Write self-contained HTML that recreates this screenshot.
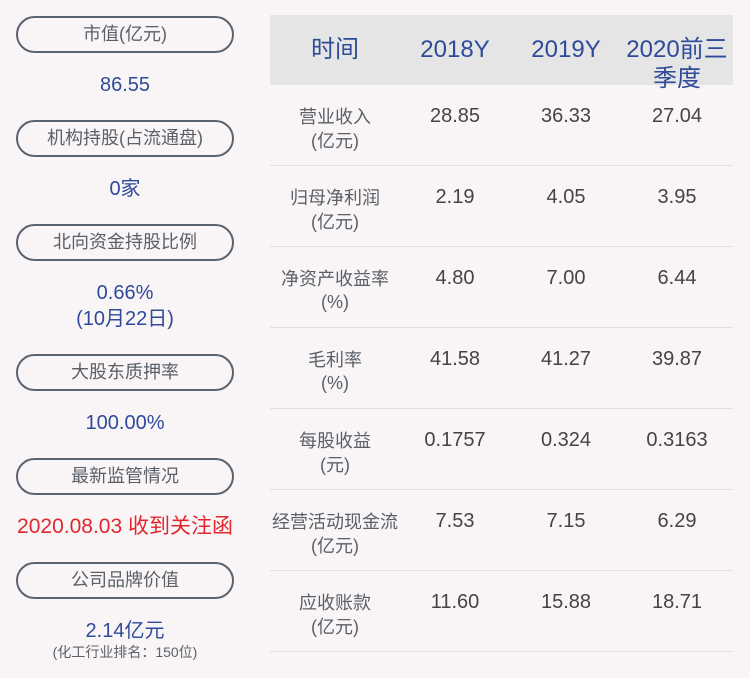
<!DOCTYPE html>
<html><head><meta charset="utf-8"><style>
body{margin:0;width:750px;height:678px;background:#f9f5f6;position:relative;overflow:hidden;font-family:"Liberation Sans","Noto Sans CJK SC",sans-serif}
.a{position:absolute;white-space:nowrap;text-align:center;line-height:1}
.pill{position:absolute;left:16px;width:214px;height:33px;border:2px solid #5b6270;border-radius:19px;color:#5a5f68;font-size:18px;text-align:center;line-height:33px}
.v{position:absolute;left:0;width:250px;text-align:center;color:#2e4a9a;font-size:20px;line-height:1}
.hd{position:absolute;left:270px;top:15px;width:463px;height:70px;background:#e5e5e5}
.h{color:#2e4a9a;font-size:24px}
.lb{color:#5a5f68;font-size:18px}
.n{color:#444;font-size:20px}
.ln{position:absolute;left:270px;width:463px;height:1px;background:#e2dfe0}
</style></head><body>
<div class="pill" style="top:16px">市值(亿元)</div>
<div class="v" style="top:75px">86.55</div>
<div class="pill" style="top:120px">机构持股(占流通盘)</div>
<div class="v" style="top:179px">0家</div>
<div class="pill" style="top:224px">北向资金持股比例</div>
<div class="v" style="top:283px">0.66%</div>
<div class="v" style="top:309px">(10月22日)</div>
<div class="pill" style="top:354px">大股东质押率</div>
<div class="v" style="top:413px">100.00%</div>
<div class="pill" style="top:458px">最新监管情况</div>
<div class="v" style="top:516px;color:#e0262e;font-size:21px">2020.08.03 收到关注函</div>
<div class="pill" style="top:562px">公司品牌价值</div>
<div class="v" style="top:621px">2.14亿元</div>
<div class="v" style="top:645px;font-size:14px;color:#5a5f68">(化工行业排名：150位)</div>

<div class="hd"></div>
<div class="a h" style="left:285px;width:100px;top:38px">时间</div>
<div class="a h" style="left:405px;width:100px;top:38px">2018Y</div>
<div class="a h" style="left:516px;width:100px;top:38px">2019Y</div>
<div class="a h" style="left:617px;width:120px;top:38px">2020前三</div>
<div class="a h" style="left:617px;width:120px;top:67px">季度</div>

<div class="a lb" style="left:265px;width:140px;top:108px">营业收入</div>
<div class="a lb" style="left:265px;width:140px;top:132px">(亿元)</div>
<div class="a n" style="left:405px;width:100px;top:106px">28.85</div>
<div class="a n" style="left:516px;width:100px;top:106px">36.33</div>
<div class="a n" style="left:627px;width:100px;top:106px">27.04</div>
<div class="ln" style="top:165px"></div>

<div class="a lb" style="left:265px;width:140px;top:189px">归母净利润</div>
<div class="a lb" style="left:265px;width:140px;top:213px">(亿元)</div>
<div class="a n" style="left:405px;width:100px;top:187px">2.19</div>
<div class="a n" style="left:516px;width:100px;top:187px">4.05</div>
<div class="a n" style="left:627px;width:100px;top:187px">3.95</div>
<div class="ln" style="top:246px"></div>

<div class="a lb" style="left:265px;width:140px;top:270px">净资产收益率</div>
<div class="a lb" style="left:265px;width:140px;top:293px">(%)</div>
<div class="a n" style="left:405px;width:100px;top:268px">4.80</div>
<div class="a n" style="left:516px;width:100px;top:268px">7.00</div>
<div class="a n" style="left:627px;width:100px;top:268px">6.44</div>
<div class="ln" style="top:327px"></div>

<div class="a lb" style="left:265px;width:140px;top:351px">毛利率</div>
<div class="a lb" style="left:265px;width:140px;top:374px">(%)</div>
<div class="a n" style="left:405px;width:100px;top:349px">41.58</div>
<div class="a n" style="left:516px;width:100px;top:349px">41.27</div>
<div class="a n" style="left:627px;width:100px;top:349px">39.87</div>
<div class="ln" style="top:408px"></div>

<div class="a lb" style="left:265px;width:140px;top:432px">每股收益</div>
<div class="a lb" style="left:265px;width:140px;top:456px">(元)</div>
<div class="a n" style="left:405px;width:100px;top:430px">0.1757</div>
<div class="a n" style="left:516px;width:100px;top:430px">0.324</div>
<div class="a n" style="left:627px;width:100px;top:430px">0.3163</div>
<div class="ln" style="top:489px"></div>

<div class="a lb" style="left:265px;width:140px;top:513px">经营活动现金流</div>
<div class="a lb" style="left:265px;width:140px;top:537px">(亿元)</div>
<div class="a n" style="left:405px;width:100px;top:511px">7.53</div>
<div class="a n" style="left:516px;width:100px;top:511px">7.15</div>
<div class="a n" style="left:627px;width:100px;top:511px">6.29</div>
<div class="ln" style="top:570px"></div>

<div class="a lb" style="left:265px;width:140px;top:594px">应收账款</div>
<div class="a lb" style="left:265px;width:140px;top:618px">(亿元)</div>
<div class="a n" style="left:405px;width:100px;top:592px">11.60</div>
<div class="a n" style="left:516px;width:100px;top:592px">15.88</div>
<div class="a n" style="left:627px;width:100px;top:592px">18.71</div>
<div class="ln" style="top:651px"></div>
</body></html>
